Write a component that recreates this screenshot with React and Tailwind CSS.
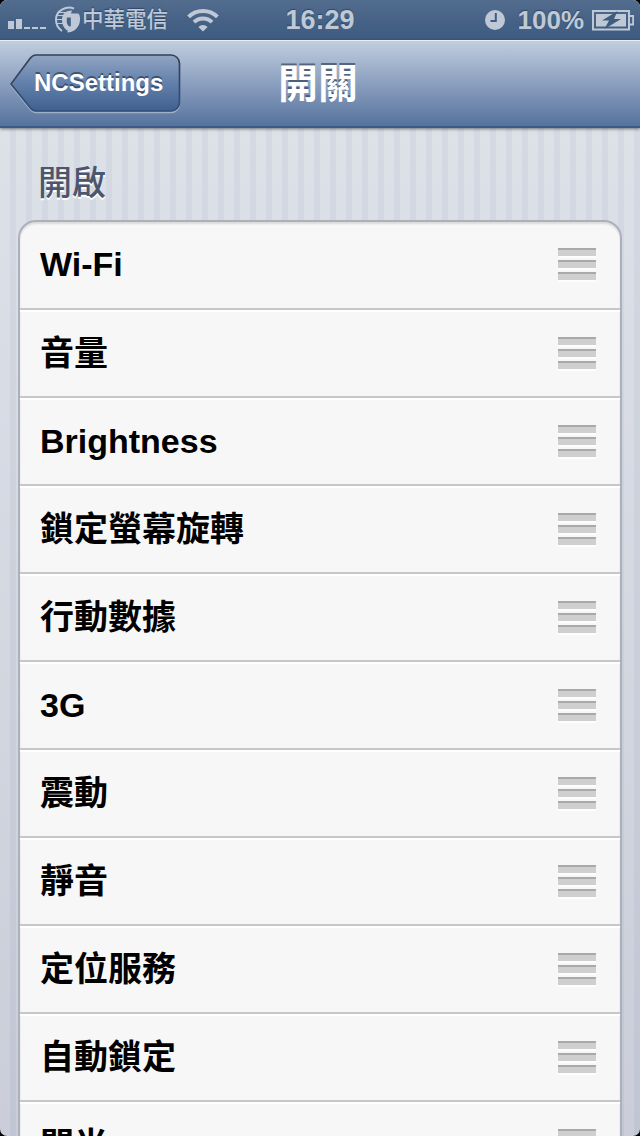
import { clsx } from "clsx";

const switches = [
  "Wi-Fi",
  "音量",
  "Brightness",
  "鎖定螢幕旋轉",
  "行動數據",
  "3G",
  "震動",
  "靜音",
  "定位服務",
  "自動鎖定",
  "閃光",
];

function CarrierLogo() {
  return (
    <svg width="28" height="28" viewBox="0 0 28 28" className="ml-[8px] shrink-0">
      <g fill="none" stroke="#bfc9d6">
        <path d="M20 2.6C13 -.5 2 4 2 13.500c0 6 3 9.500 6 11.500" strokeWidth="2" />
        <path d="M3 9.500h8M2 13.500h8M3 17.500h7M5 6.500h8" strokeWidth="1" />
        <path d="M24.500 9c2 8-2 16-11 16.500" strokeWidth="2" />
      </g>
      <path
        d="M18 4.500c-7 0-10 4-10 9.500 0 6 3.500 11 8 11 5.500 0 8.800-5 8.800-10.500V7.500H12.200v4h4.600v8.300c0 1-1.600 1-2.400 0-1.300-1.500-1.700-3.300-1.700-5.800 0-3 1.300-5.500 4.300-6.500z"
        fill="#bfc9d6"
      />
    </svg>
  );
}

function WifiIcon() {
  return (
    <svg width="34" height="26" viewBox="0 0 34 26" className="ml-[17px] shrink-0">
      <g fill="none" stroke="#bfc9d6" strokeWidth="4">
        <path d="M2.600 9.800a20.500 20.500 0 0 1 28.800 0" />
        <path d="M8 15.200a12.700 12.700 0 0 1 18 0" />
      </g>
      <path d="M17 24.500l-4.600-4.600a6.500 6.500 0 0 1 9.200 0z" fill="#bfc9d6" />
    </svg>
  );
}

function BatteryIcon() {
  return (
    <svg width="42" height="21" viewBox="0 0 42 21" className="ml-[8px] shrink-0">
      <rect x="1" y="1" width="36" height="18.500" fill="none" stroke="#bfc9d6" strokeWidth="2" />
      <path d="M38 6h3.200v8.500H38" fill="none" stroke="#bfc9d6" strokeWidth="2" />
      <rect x="4" y="4" width="30" height="12.500" fill="#bfc9d6" />
      <path d="M25.500 1L10 10.500h7L12.500 19 29 9h-7z" fill="#3f5b80" />
    </svg>
  );
}

function StatusBar() {
  return (
    <div className="relative flex h-[40px] items-center bg-linear-to-b from-[#536d8f] via-[#466286] to-[#3e5b81] text-[#bfc9d6] [text-shadow:0_-1px_1px_rgba(30,50,80,0.6)]">
      <div className="ml-[8px] flex h-[10px] w-[38px] items-end gap-[2px] pb-0 mt-[8px]">
        <span className="h-[8px] w-[6px] bg-[#bfc9d6]" />
        <span className="h-[10px] w-[6px] bg-[#bfc9d6]" />
        <span className="h-[2px] w-[6px] bg-[#bfc9d6]" />
        <span className="h-[2px] w-[6px] bg-[#bfc9d6]" />
        <span className="h-[2px] w-[6px] bg-[#bfc9d6]" />
      </div>
      <CarrierLogo />
      <span className="w-[87px] text-[21.500px] leading-[40px] font-medium whitespace-nowrap">中華電信</span>
      <WifiIcon />
      <span className="absolute inset-x-0 text-center text-[27px] leading-[40px] font-bold">16:29</span>
      <div className="ml-auto flex items-center pr-[6px]">
        <svg width="20" height="20" viewBox="0 0 20 20">
          <circle cx="10" cy="10" r="10" fill="#bfc9d6" />
          <path d="M10.800 3v8H5.500" fill="none" stroke="#3f5b80" strokeWidth="2" />
        </svg>
        <span className="ml-[13px] text-[26px] leading-[40px] font-bold">100%</span>
        <BatteryIcon />
      </div>
    </div>
  );
}

function BackButton() {
  return (
    <button type="button" className="relative ml-[10px] h-[60px] w-[171px] shrink-0">
      <svg width="171" height="60" viewBox="0 0 171 60" className="absolute inset-0">
        <defs>
          <linearGradient id="back" x1="0" y1="0" x2="0" y2="1">
            <stop offset="0" stopColor="#92a5c2" />
            <stop offset="0.5" stopColor="#6280ab" />
            <stop offset="1" stopColor="#3f608f" />
          </linearGradient>
          <linearGradient id="backEdge" x1="0" y1="0" x2="0" y2="1">
            <stop offset="0" stopColor="#354052" />
            <stop offset="1" stopColor="#344f7a" />
          </linearGradient>
        </defs>
        <path
          d="M26 2.500H161a8.500 8.500 0 0 1 8.500 8.500V50a8.500 8.500 0 0 1-8.500 8.500H26c-3 0-4.500-1.500-6-3.500L1 31.500 20 6c1.500-2 3-3.500 6-3.500z"
          fill="none"
          stroke="#9fb1ca"
          strokeWidth="1.500"
        />
        <path
          d="M26 1H161a8.500 8.500 0 0 1 8.500 8.500V48.500a8.500 8.500 0 0 1-8.500 8.500H26c-3 0-4.500-1.500-6-3.500L1 30 20 4.500c1.500-2 3-3.500 6-3.500z"
          fill="url(#back)"
          stroke="url(#backEdge)"
          strokeWidth="1.700"
        />
      </svg>
      <span className="relative block pb-[1px] pl-[24px] text-left text-[24px] leading-[56px] font-bold text-white [text-shadow:0_-2px_0_rgba(35,50,75,0.65)]">
        NCSettings
      </span>
    </button>
  );
}

function NavBar() {
  return (
    <div className="relative z-10 flex h-[88px] items-center border-t border-b-2 border-t-[#e8edf3] border-b-[#3b5a87] bg-linear-to-b from-[#c0cede] via-[#8b9fbf] to-[#56739d] shadow-[0_1px_3px_rgba(0,0,0,0.5)]">
      <BackButton />
      <h1 className="absolute inset-x-0 -ml-[4px] text-center text-[40px] leading-[80px] font-bold text-white [text-shadow:0_-2px_0_rgba(50,65,90,0.7)]">
        開關
      </h1>
    </div>
  );
}

function DragHandle() {
  return (
    <div className="flex w-[38px] flex-col gap-[4px]">
      <span className="h-[8px] border-t-2 border-[#a9a9a9] bg-[#cfcfcf] shadow-[0_2px_0_#fdfdfd]" />
      <span className="h-[8px] border-t-2 border-[#a9a9a9] bg-[#cfcfcf] shadow-[0_2px_0_#fdfdfd]" />
      <span className="h-[8px] border-t-2 border-[#a9a9a9] bg-[#cfcfcf] shadow-[0_2px_0_#fdfdfd]" />
    </div>
  );
}

function SwitchRow({ label, first }) {
  return (
    <li
      className={clsx(
        "flex items-center justify-between border-b-2 border-[#c7c7c7] pr-[24px] pl-[20px]",
        first ? "h-[88px] pb-[2px]" : "h-[88px] shadow-[inset_0_2px_0_#ffffff]"
      )}
    >
      <span className="text-[34px] leading-[84px] font-bold text-black">{label}</span>
      <DragHandle />
    </li>
  );
}

export default function App() {
  return (
    <div className="h-[1136px] w-[640px] overflow-hidden bg-black font-['Liberation_Sans','Noto_Sans_CJK_TC',sans-serif]">
      <div className="h-[1136px] overflow-hidden rounded-[7px] bg-[repeating-linear-gradient(90deg,rgba(255,255,255,0.07)_0px_10px,rgba(100,120,160,0.05)_10px_16px),linear-gradient(180deg,#dadfe7_128px,#c6cad6_1136px)]">
        <StatusBar />
        <NavBar />
        <h2 className="h-[92px] pt-[30px] pl-[38px] text-[34px] leading-[50px] font-medium text-[#4c566c] [text-shadow:0_2px_0_#ffffff]">
          開啟
        </h2>
        <ul className="mx-[18px] rounded-t-[18px] border-2 border-[#abb0bb] bg-[#f7f7f7] shadow-[inset_0_2px_2px_rgba(0,0,0,0.12)]">
          {switches.map((label, i) => (
            <SwitchRow key={label} label={label} first={i === 0} />
          ))}
        </ul>
      </div>
    </div>
  );
}
